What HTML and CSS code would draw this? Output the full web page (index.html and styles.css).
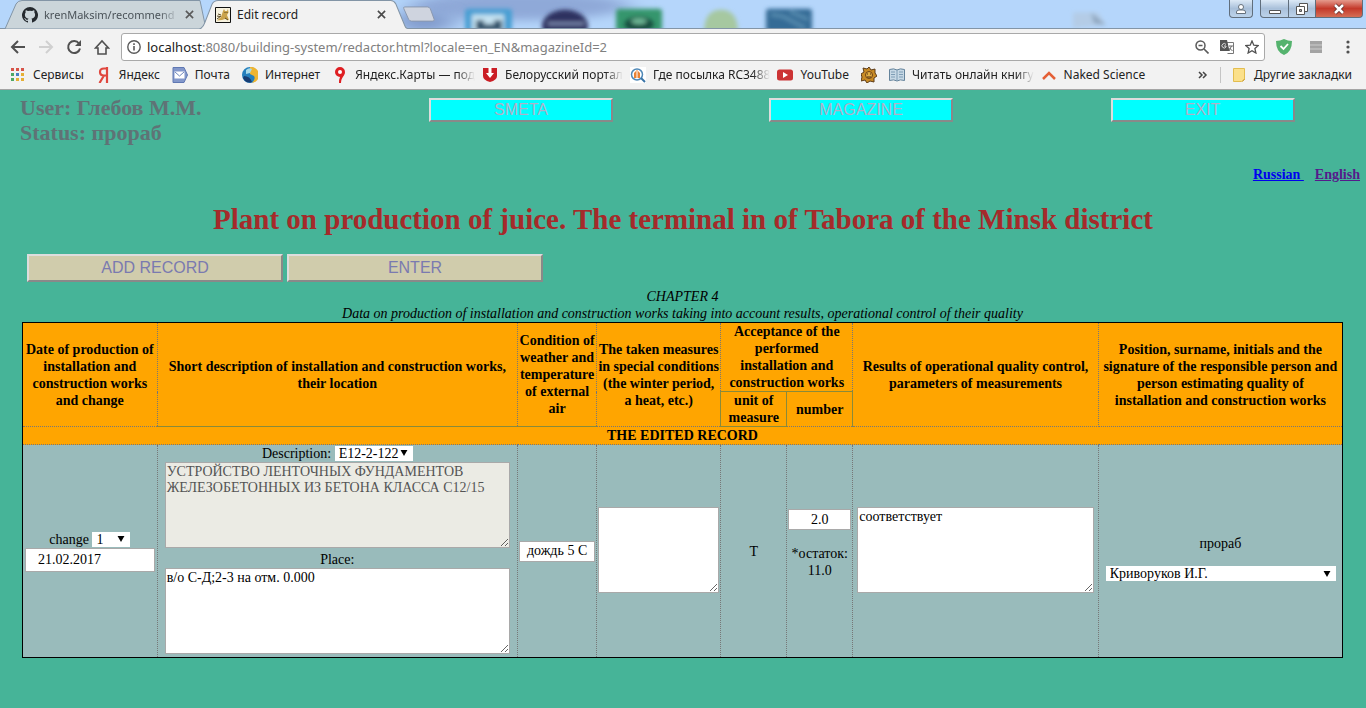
FILE: index.html
```html
<!DOCTYPE html>
<html lang="en">
<head>
<meta charset="utf-8">
<title>Edit record</title>
<link rel="stylesheet" href="styles.css">
</head>
<body>
<div class="browser">
  <div class="tabstrip">
    <svg class="desktop" viewBox="0 0 1366 29" preserveAspectRatio="none" aria-hidden="true">
      <defs>
        <filter id="soft" x="-20%" y="-50%" width="140%" height="200%"><feGaussianBlur stdDeviation="2"/></filter>
        <filter id="haze" x="-20%" y="-50%" width="140%" height="200%"><feGaussianBlur stdDeviation="12 5"/></filter>
      </defs>
      <ellipse cx="520" cy="6" rx="110" ry="15" fill="#8fa9d8" filter="url(#haze)"/>
      <ellipse cx="425" cy="22" rx="30" ry="12" fill="#839dce" filter="url(#haze)"/>
      <g filter="url(#soft)">
        <rect x="465" y="9" width="47" height="24" rx="3" fill="#469fd3"/>
        <rect x="472" y="15" width="32" height="20" fill="#c5e2f1"/>
        <path d="M476 32V21h8v4h10v-4h8v11" fill="#31536c"/>
        <ellipse cx="565" cy="27" rx="23" ry="17" fill="#2d3260"/>
        <rect x="548" y="23" width="36" height="3" fill="#8190b4"/>
        <rect x="616" y="9" width="46" height="24" rx="3" fill="#36966d"/>
        <ellipse cx="639" cy="25" rx="15" ry="8" fill="#164d40"/>
        <ellipse cx="639" cy="22" rx="8" ry="3" fill="#6fba98"/>
        <path d="M704 34q0-24 17-24t17 24z" fill="#a6c8a0"/>
        <rect x="766" y="9" width="46" height="24" rx="3" fill="#356c96"/>
        <path d="m771 15 12 2 22 12M790 12l18 8" stroke="#5c91b4" stroke-width="3" fill="none"/>
        <path d="M1073 29V13h25l8 13" fill="#b4cce6"/>
        <path d="m1091 13 15 13-12-2z" fill="#8da5be"/>
      </g>
    </svg>
    <div class="tab tab-back">
      <svg class="tab-shape" viewBox="0 0 206 29" preserveAspectRatio="none"><path d="M5 29 16 4Q18 .5 22 .5H200L206 29z" fill="#cbd5da" stroke="#8395a6"/></svg>
      <svg class="icon" viewBox="0 0 16 16"><path fill="#24292e" d="M8 0a8 8 0 0 0-2.5 15.6c.4.1.5-.2.5-.4v-1.400c-2.200.5-2.700-1-2.700-1-.4-.9-.9-1.200-.9-1.200-.7-.5.1-.5.1-.5.8.1 1.200.8 1.200.8.7 1.300 1.900.9 2.300.7.1-.5.3-.9.5-1.100-1.800-.2-3.600-.9-3.600-4 0-.9.3-1.600.8-2.100-.1-.2-.4-1 .1-2.100 0 0 .7-.2 2.200.8a7.500 7.500 0 0 1 4 0c1.500-1 2.200-.8 2.200-.8.4 1.100.2 1.900.1 2.100.5.6.8 1.300.8 2.100 0 3.100-1.900 3.800-3.700 4 .3.3.6.8.6 1.500v2.200c0 .2.1.5.5.4A8 8 0 0 0 8 0z"/></svg>
      <span class="tab-title fade">krenMaksim/recommend</span>
      <button class="plain" aria-label="Close tab"><svg class="cross" viewBox="0 0 10 10"><path d="m1 1 8 8m0-8-8 8" stroke="#5a5a5a" stroke-width="1.800"/></svg></button>
    </div>
    <div class="tab tab-front">
      <svg class="tab-shape" viewBox="0 0 210 29" preserveAspectRatio="none"><path d="M0 29.5Q4 28 6 22L13 4Q15 .5 19 .5H190Q193 .5 195 4L204 26Q205 29 210 29.5z" fill="#f2f2f2" stroke="#8395a6"/></svg>
      <svg class="icon" viewBox="0 0 16 16"><path fill="#f7f2df" stroke="#111" d="M.5.5h15v15H.5z"/><path fill="#caa34b" d="m8 4 1-2 1 2h2l1-2 .5 3.500L12 8l2 5-4-1-3 1-5 .5L6 10z"/><path d="m3 7 3 1M2 9l3 .5M2 12l4-3m4 2 3 2M9.500 5.500h1m1 0h1" stroke="#5b4923"/></svg>
      <span class="tab-title">Edit record</span>
      <button class="plain" aria-label="Close tab"><svg class="cross" viewBox="0 0 10 10"><path d="m1 1 8 8m0-8-8 8" stroke="#4b4b4b" stroke-width="1.800"/></svg></button>
    </div>
    <button class="plain newtab" aria-label="New tab"><svg viewBox="0 0 34 18"><path d="M2 1h24q2 0 3 2l4 11q1 2-2 2H9q-2 0-3-2L1 3q-1-2 1-2z" fill="#cfd4df" stroke="#8997ad"/></svg></button>
    <div class="window-buttons">
      <button class="wbtn user" aria-label="Profile"><svg viewBox="0 0 12 12"><circle cx="6" cy="4" r="2.500" fill="#fff" stroke="#65707b"/><path d="M1.500 10.500V9q0-2 2.500-2h4q2.500 0 2.500 2v1.500z" fill="#fff" stroke="#65707b"/></svg></button>
      <button class="wbtn min" aria-label="Minimize"><svg viewBox="0 0 12 12"><path d="M.5 7.500h11v3H.5z" fill="#fff" stroke="#555"/></svg></button>
      <button class="wbtn max" aria-label="Restore"><svg viewBox="0 0 12 12"><path d="M3.500.5h8v8h-8z" fill="#fff" stroke="#555"/><path d="M.5 3.500h8v8h-8z" fill="#fff" stroke="#555"/><path d="M3.500 6.500h2v2h-2z" fill="#aaa" stroke="#555"/></svg></button>
      <button class="wbtn close" aria-label="Close"><svg viewBox="0 0 12 12"><path d="m2 2 8 8m0-8-8 8" stroke="#5d2b27" stroke-width="4"/><path d="m2 2 8 8m0-8-8 8" stroke="#fff" stroke-width="2.500"/></svg></button>
    </div>
  </div>

  <div class="toolbar">
    <button class="plain nav-btn" aria-label="Back"><svg class="nav" viewBox="0 0 16 16"><path d="M15 8H2m6-6L2 8l6 6" fill="none" stroke="#505050" stroke-width="2"/></svg></button>
    <button class="plain nav-btn" aria-label="Forward"><svg class="nav" viewBox="0 0 16 16"><path d="M1 8h13M8 2l6 6-6 6" fill="none" stroke="#d0d0d0" stroke-width="2"/></svg></button>
    <button class="plain nav-btn" aria-label="Reload"><svg class="nav" viewBox="0 0 16 16"><path d="M13 4.500A6 6 0 1 0 14 9.500" fill="none" stroke="#505050" stroke-width="2"/><path d="M15 1v6H9z" fill="#505050"/></svg></button>
    <button class="plain" aria-label="Home"><svg class="nav" viewBox="0 0 16 16"><path d="M1.500 9 8 2l6.500 7H12v6H4V9z" fill="none" stroke="#505050" stroke-width="1.600"/></svg></button>
    <div class="omnibox">
      <svg class="icon14" viewBox="0 0 14 14"><circle cx="7" cy="7" r="6.200" fill="none" stroke="#5a5a5a" stroke-width="1.400"/><path d="M7 6v4.500M7 3.300v1.600" stroke="#5a5a5a" stroke-width="1.600"/></svg>
      <div class="url"><span class="host">localhost</span>:8080/building-system/redactor.html?locale=en_EN&amp;magazineId=2</div>
      <svg class="icon14" viewBox="0 0 14 14"><circle cx="5.500" cy="5.500" r="4.500" fill="none" stroke="#5a5a5a" stroke-width="1.500"/><path d="m9 9 4.500 4.500M3.500 5.500h4" stroke="#5a5a5a" stroke-width="1.600"/></svg>
      <svg class="icon14" viewBox="0 0 14 14"><path d="M5.500 2.500h8v11h-6" fill="#fff" stroke="#777"/><path d="M0 0h7l2.500 11H0z" fill="#555"/><path d="M6 4.500A2.200 2.200 0 1 0 6 7V6H4" fill="none" stroke="#ddd"/><path d="M9 6h4m-1.500 0L9 11m.5-3 3 3" stroke="#666" fill="none"/></svg>
      <svg class="icon14" viewBox="0 0 14 14"><path d="m7 1 1.800 4.200 4.500.4-3.400 3 1 4.400L7 10.700 3.100 13l1-4.400-3.400-3 4.500-.4z" fill="none" stroke="#505050" stroke-width="1.300"/></svg>
    </div>
    <svg class="icon" viewBox="0 0 16 16"><path d="M8 0q4 2 8 2 0 11-8 14Q0 13 0 2q4 0 8-2z" fill="#55b36e"/><path d="m4.500 7 3 3 4.500-5" fill="none" stroke="#fff" stroke-width="1.800"/></svg>
    <svg class="icon14" viewBox="0 0 14 14"><path d="M1 1h12v12H1z" fill="#a3a3a3"/><path d="M1 5h12M1 9h12" stroke="#ccc"/></svg>
    <button class="plain" aria-label="Menu"><svg class="dots" viewBox="0 0 4 14"><circle cx="2" cy="2" r="1.600"/><circle cx="2" cy="7" r="1.600"/><circle cx="2" cy="12" r="1.600"/></svg></button>
  </div>

  <div class="bookmarks">
    <a href="#" class="bm"><svg class="icon" viewBox="0 0 16 16"><path fill="#d75449" d="M1 1h3v3H1zM6 1h3v3H6zM11 1h3v3h-3z"/><path fill="#4fa866" d="M1 6h3v3H1zM1 11h3v3H1z"/><path fill="#4a7fc4" d="M6 6h3v3H6z"/><path fill="#e6b036" d="M11 6h3v3h-3zM6 11h3v3H6zM11 11h3v3h-3z"/></svg><span>Сервисы</span></a>
    <a href="#" class="bm"><svg class="icon" viewBox="0 0 16 16"><path d="M11 0v16M11 1.500H8Q4 1.500 4 5t4 3.500h3M8 8.500 3.500 16" fill="none" stroke="#e0473e" stroke-width="2.200"/></svg><span>Яндекс</span></a>
    <a href="#" class="bm"><svg class="icon" viewBox="0 0 16 16"><path d="M1 .5h11l3.500 7.500-3.500 7.500H1z" fill="#8398cb" stroke="#6078b3"/><path d="M2.500 4.500h10v7h-10z" fill="#fff"/><path d="m3 5 4.500 4L12 5" fill="none" stroke="#7087bd"/></svg><span>Почта</span></a>
    <a href="#" class="bm"><svg class="icon" viewBox="0 0 16 16"><circle cx="8" cy="8" r="8" fill="#247fbd"/><path d="M8 0a8 8 0 0 1 2 16q4-4 2-7L8 7z" fill="#efb42f"/><path d="M2 9q6 0 8 6-6 2-9-4z" fill="#173d73"/><path d="M4 3q3-3 6-1L8 6 4 7z" fill="#a8dae9"/></svg><span>Интернет</span></a>
    <a href="#" class="bm"><svg class="icon" viewBox="0 0 16 16"><path d="M8 0a5 5 0 0 1 5 5c0 4-4 5-4 11H7q0-4 1-6a5 5 0 0 1 0-10z" fill="#df1f23"/><circle cx="8" cy="5" r="2" fill="#fff"/></svg><span class="fade">Яндекс.Карты — под</span></a>
    <a href="#" class="bm"><svg class="icon" viewBox="0 0 16 16"><path d="M1 1h14v8q0 4-7 6Q1 13 1 9z" fill="#cb1e25"/><path d="M6.500 0h3v6H12L8 11 4 6h2.500z" fill="#fff"/></svg><span class="fade">Белорусский портал</span></a>
    <a href="#" class="bm"><svg class="icon" viewBox="0 0 16 16"><path fill="#fff" d="M0 0h16v16H0z"/><circle cx="7" cy="7.500" r="5.500" fill="#fff" stroke="#4f88b7" stroke-width="1.500"/><path d="M4 11V6l3-3 3 3v5z" fill="#e98234"/><path d="M7 4v7" stroke="#fff"/><path d="m11 11 4 4" stroke="#3973a6" stroke-width="2"/></svg><span class="fade">Где посылка RC3488</span></a>
    <a href="#" class="bm"><svg class="icon" viewBox="0 0 16 16"><rect y="2.500" width="16" height="11" rx="2.500" fill="#cc3334"/><path d="m6 5 5 3-5 3z" fill="#fff"/></svg><span>YouTube</span></a>
    <a href="#" class="bm" aria-label="Sun"><svg class="icon" viewBox="0 0 16 16"><path d="m2 1 4 1 2-2 2 3 4-1v4l2 3-3 2v4l-4-1-3 2-2-3-4 1 1-4-1-3 3-2z" fill="#c88b25" stroke="#5d3b17"/><circle cx="8" cy="8" r="3.500" fill="#e1ae42" stroke="#6e4115"/><path d="M6 7h1m2 0h1M6 10h4" stroke="#4c2b10"/></svg></a>
    <a href="#" class="bm"><svg class="icon" viewBox="0 0 16 16"><path d="M.5 2.500Q5 1 8 3q3-2 7.500-.5v11Q11 12 8 14q-3-2-7.500-.5z" fill="#c7d8e5" stroke="#64839b"/><path d="M8 3v11M2 5h4M2 7.500h4M2 10h4m4-5h4m-4 2.500h4M10 10h4" stroke="#7e9db5"/></svg><span class="fade">Читать онлайн книгу</span></a>
    <a href="#" class="bm"><svg class="icon" viewBox="0 0 16 16"><path d="m2 12 6-6 6 6" fill="none" stroke="#e46036" stroke-width="2.500"/></svg><span>Naked Science</span></a>
    <button class="plain more" aria-label="More bookmarks"><svg viewBox="0 0 10 8"><path d="m1 1 3 3-3 3m4-6 3 3-3 3" fill="none" stroke="#444" stroke-width="1.500"/></svg></button>
    <a href="#" class="bm other"><svg class="icon" viewBox="0 0 16 16"><path d="M2.500 1.500h11v11l-3 2h-8z" fill="#fbe08a" stroke="#e3bd4f"/><path d="m13.500 12-2 2.500" stroke="#c99b31"/></svg><span>Другие закладки</span></a>
  </div>
</div>

<main class="page">
  <header class="top">
    <div class="who">User: Глебов М.М.<br>Status: прораб</div>
    <button class="menu-btn">SMETA</button>
    <button class="menu-btn">MAGAZINE</button>
    <button class="menu-btn">EXIT</button>
  </header>
  <nav class="langs"><a href="#ru">Russian&nbsp;</a><a href="#en" class="seen">English</a></nav>
  <h1>Plant on production of juice. The terminal in of Tabora of the Minsk district</h1>
  <div class="actions"><button class="action">ADD RECORD</button><button class="action">ENTER</button></div>

  <table class="record">
    <caption>CHAPTER 4<br>Data on production of installation and construction works taking into account results, operational control of their quality</caption>
    <colgroup><col class="c-date"><col class="c-desc"><col class="c-weather"><col class="c-measures"><col class="c-unit"><col class="c-number"><col class="c-results"><col class="c-person"></colgroup>
    <thead>
      <tr>
        <th rowspan="2">Date of production of installation and construction works and change</th>
        <th rowspan="2" class="line-b">Short description of installation and construction works, their location</th>
        <th rowspan="2" class="line-b">Condition of weather and temperature of external air</th>
        <th rowspan="2">The taken measures in special conditions (the winter period, a&nbsp;heat, etc.)</th>
        <th colspan="2">Acceptance of the performed installation and construction works</th>
        <th rowspan="2">Results of operational quality control, parameters of measurements</th>
        <th rowspan="2">Position, surname, initials and the signature of the responsible person and person estimating quality of installation&nbsp;and construction works</th>
      </tr>
      <tr><th class="line-box">unit of measure</th><th class="line-top">number</th></tr>
      <tr><th colspan="8">THE EDITED RECORD</th></tr>
    </thead>
    <tbody>
      <tr>
        <td>
          <label for="shift">change</label>
          <span class="pick"><select id="shift" class="sel-shift"><option>1</option><option>2</option></select><svg viewBox="0 0 8 7"><path d="M0 0h8L4 7z"/></svg></span>
          <input class="date" type="text" value="21.02.2017" aria-label="Date">
        </td>
        <td>
          <div><label for="code">Description:</label>
          <span class="pick"><select id="code" class="sel-code"><option>E12-2-122</option></select><svg viewBox="0 0 8 7"><path d="M0 0h8L4 7z"/></svg></span></div>
          <textarea disabled aria-label="Work description">УСТРОЙСТВО ЛЕНТОЧНЫХ ФУНДАМЕНТОВ ЖЕЛЕЗОБЕТОННЫХ ИЗ БЕТОНА КЛАССА С12/15</textarea>
          <label class="place" for="place">Place:</label>
          <textarea id="place">в/о С-Д;2-3 на отм. 0.000</textarea>
        </td>
        <td><input class="short" type="text" value="дождь 5 С" aria-label="Weather"></td>
        <td><textarea class="tight" aria-label="Measures"></textarea></td>
        <td>Т</td>
        <td><input class="short" type="text" value="2.0" aria-label="Number"><p class="rest">*остаток:<br>11.0</p></td>
        <td><textarea class="results" aria-label="Results">соответствует</textarea></td>
        <td><p class="post">прораб</p><span class="pick wide"><select class="sel-person" aria-label="Person"><option>Криворуков И.Г.</option></select><svg viewBox="0 0 8 7"><path d="M0 0h8L4 7z"/></svg></span></td>
      </tr>
    </tbody>
  </table>
</main>
</body>
</html>
```
FILE: styles.css
```css
* { box-sizing: border-box; }
body {
  margin: 0;
  min-height: 100vh;
  background: #46b498;
  font: 14px/17px "Liberation Serif", serif;
  color: #000;
}
.plain { display: flex; padding: 0; border: 0; background: none; }
.icon { width: 16px; height: 16px; flex: none; }
.icon14 { width: 14px; height: 14px; flex: none; }
.fade {
  -webkit-mask-image: linear-gradient(to right, #000 85%, transparent);
  mask-image: linear-gradient(to right, #000 85%, transparent);
}

/* Browser frame */
.browser { font: 12px/16px "Noto Sans", sans-serif; background: #f2f2f2; border-bottom: 1px solid #a5a5a5; }
.tabstrip { position: relative; display: flex; height: 29px; background: #b5d6fb; border-bottom: 1px solid #8395a6; }
.desktop { position: absolute; inset: 0; width: 100%; height: 28px; }
.tab { position: relative; display: flex; align-items: center; gap: 6px; height: 29px; }
.tab > * { position: relative; }
.tab > .tab-shape { position: absolute; inset: 0; width: 100%; height: 100%; }
.tab-back { width: 206px; padding: 0 12px 0 22px; font-size: 11px; }
.tab-front { width: 212px; margin-left: -7px; padding: 0 25px 0 16px; }
.tab-title { flex: 1; white-space: nowrap; color: #222; }
.tab-back .tab-title { color: #4a5258; }
.cross { width: 9px; height: 9px; }
.newtab { position: relative; align-self: center; margin-left: -9px; }
.newtab svg { width: 34px; height: 17px; }
.window-buttons { position: relative; display: flex; height: 18px; margin-left: auto; padding-right: 3px; }
.wbtn { display: flex; align-items: center; justify-content: center; padding: 0; border: 1px solid #606e7c; border-top: 0; background: linear-gradient(#dce9f6, #a9c0da 50%, #bcd3ea); }
.wbtn svg { width: 12px; height: 12px; }
.user { width: 24px; margin-right: 7px; border-radius: 0 0 4px 4px; }
.min { width: 29px; border-radius: 0 0 0 4px; }
.max { width: 27px; border-left: 0; }
.close { width: 47px; border-left: 0; border-radius: 0 0 4px 0; background: linear-gradient(#e59a8c, #c4392a 50%, #d56e55); }

.toolbar { display: flex; align-items: center; height: 34px; padding: 2px 16px 0 10px; gap: 11px; }
.nav { width: 16px; height: 16px; }
.nav-btn { margin-right: 1px; }
.omnibox { display: flex; flex: 1; align-items: center; gap: 11px; height: 28px; padding: 0 5px; background: #fff; border: 1px solid #a9a9a9; border-radius: 3px; }
.url { flex: 1; margin-left: -5px; font-size: 13px; line-height: 18px; color: #808080; white-space: nowrap; }
.host { color: #222; }
.toolbar > .icon14 { margin: 0 12px 0 6px; }
.dots { width: 4px; height: 14px; fill: #505050; }

.bookmarks { display: flex; align-items: center; height: 26px; padding: 0 14px 2px 10px; gap: 12px; }
.bm { display: flex; align-items: center; gap: 7px; color: #222; text-decoration: none; white-space: nowrap; }
.bm .fade { margin-right: -5px; }
.more { margin-left: auto; }
.more svg { width: 10px; height: 8px; }
.other { padding-left: 10px; border-left: 1px solid #c5c5c5; }

/* Page */
.page { padding-bottom: 50px; }
.top { display: grid; grid-template-columns: 31.4% 24.9% 25% 1fr; align-items: start; padding-top: 5px; }
.who { padding-left: 20px; font-size: 22px; font-weight: bold; line-height: 25px; color: #5f7376; }
.menu-btn { width: 184px; height: 24px; margin-top: 3px; padding: 0; border: 2px outset #ddd; background: #0ff; color: #b0b0c8; font: 16px/20px "Liberation Sans", sans-serif; }
.langs { display: flex; justify-content: flex-end; gap: 11px; padding: 21px 6px 0 0; font-weight: bold; }
.langs a { color: #00e; }
.langs .seen { color: #551a8b; }
h1 { margin: 20px 0 19px; font-size: 29px; line-height: 32px; text-align: center; color: #a52a2a; }
.actions { display: flex; gap: 4px; padding-left: 27px; }
.action { width: 256px; height: 28px; padding: 0; border: 2px outset #ddd; background: #d0ccac; color: #7a7ab0; font: 16px/20px "Liberation Sans", sans-serif; }

.record { width: calc(100% - 45px); margin: 6px 23px 0 22px; table-layout: fixed; border-collapse: collapse; border: 1px solid #000; background: #99bbbb; }
.record caption { font-style: italic; }
.record thead { background: #ffa500; }
.record th, .record td { padding: 0; border: 1px dotted #777; text-align: center; vertical-align: middle; }
.record tr > :first-child:not(.line-box) { border-left: 1px solid #000; }
.record tr > :last-child:not(.line-top) { border-right: 1px solid #000; }
.record tr:first-child > th { border-top: 1px solid #000; }
.record tbody td { border-bottom: 1px solid #000; }
.record .line-b { border-bottom: 1px solid #8a8a3a; }
.record .line-box { border: 1px solid #8a8a3a; }
.record .line-top { border-top: 1px solid #8a8a3a; border-right: 1px solid #8a8a3a; }
.c-date { width: 10.2%; }
.c-desc { width: 27.3%; }
.c-weather { width: 6%; }
.c-measures { width: 9.4%; }
.c-unit { width: 5%; }
.c-number { width: 5%; }
.c-results { width: 18.6%; }
.c-person { width: 18.5%; }

input, select, textarea { font: 14px/16px "Liberation Serif", serif; color: #000; background: #fff; border: 1px solid #a9a9a9; border-radius: 0; }
input { padding: 0 2px; }
.date { display: block; width: calc(100% - 4px); height: 24px; margin: 0 auto; padding: 0 12px; }
.short { display: block; width: calc(100% - 2px); height: 21px; margin: 0 auto; text-align: center; }
textarea { display: block; width: calc(100% - 14px); height: 86px; margin: 0 auto 3px; padding: 1px; resize: both; }
textarea:disabled { background: #ebebe4; color: #545454; }
.tight { width: calc(100% - 2px); }
.results { width: calc(100% - 8px); }
.place { display: block; line-height: 17px; }
.pick { position: relative; display: inline-block; }
.pick svg { position: absolute; right: 5px; top: 5px; width: 8px; height: 6px; pointer-events: none; }
select { appearance: none; display: block; height: 15px; margin: 1px 0; padding: 0 4px; border: 0; line-height: 15px; }
.sel-shift { width: 38px; }
.sel-code { width: 78px; }
.wide { display: block; margin: 0 6px 0 7px; }
.sel-person { width: 100%; }
.rest { margin: 15px 0 14px; }
.post { margin: 14px 0; }
```
